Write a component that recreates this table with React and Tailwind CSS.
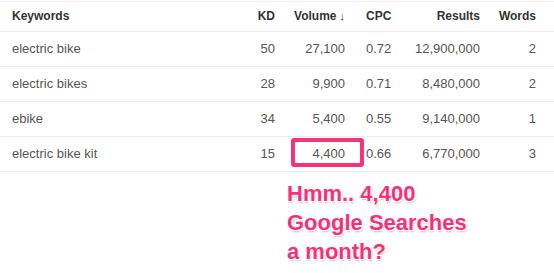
const ROWS = [
  { keyword: 'electric bike', kd: 50, volume: '27,100', cpc: '0.72', results: '12,900,000', words: 2 },
  { keyword: 'electric bikes', kd: 28, volume: '9,900', cpc: '0.71', results: '8,480,000', words: 2 },
  { keyword: 'ebike', kd: 34, volume: '5,400', cpc: '0.55', results: '9,140,000', words: 1 },
  { keyword: 'electric bike kit', kd: 15, volume: '4,400', cpc: '0.66', results: '6,770,000', words: 3, flagged: true },
];

export default function App() {
  return (
    <div
      className="w-[554px] h-[273px] bg-white overflow-hidden"
      style={{ fontFamily: '"Liberation Sans", Arial, sans-serif' }}
    >
      <div className="h-[1px] mt-[1px] bg-[#f0f0f0]" />
      <table className="w-[554px] table-fixed border-collapse">
        <colgroup>
          <col className="w-[240px]" />
          <col className="w-[43px]" />
          <col className="w-[70px]" />
          <col className="w-[47px]" />
          <col className="w-[88px]" />
          <col className="w-[66px]" />
        </colgroup>
        <thead>
          <tr className="h-[29px] border-b border-[#ececec] text-[12px] font-bold text-[#333]">
            <th className="pl-3 text-left">Keywords</th>
            <th className="pr-2 text-right">KD</th>
            <th className="pr-2 text-right whitespace-nowrap">
              Volume<span className="ml-[3px] text-[11px]">↓</span>
            </th>
            <th className="pl-[13px] text-left">CPC</th>
            <th className="pr-2 text-right">Results</th>
            <th className="pr-[18px] text-right">Words</th>
          </tr>
        </thead>
        <tbody className="text-[13px] text-[#555]">
          {ROWS.map(row => (
            <tr key={row.keyword} className="h-[35px] border-b border-[#ececec]">
              <td className="pl-3">{row.keyword}</td>
              <td className="pr-2 text-right">{row.kd}</td>
              <td className="pr-2 text-right relative">
                {row.volume}
                {row.flagged && (
                  <div className="absolute left-[8px] top-[1px] w-[73px] h-[29px] border-[4px] border-[#f7347a] rounded-[3px]" />
                )}
              </td>
              <td className="pl-[13px] text-left">{row.cpc}</td>
              <td className="pr-2 text-right">{row.results}</td>
              <td className="pr-[18px] text-right">{row.words}</td>
            </tr>
          ))}
        </tbody>
      </table>

      {/* Annotation */}
      <p
        className="ml-[287px] mt-[7px] text-[22px] leading-[29px] font-bold text-[#fb2f78]"
        style={{ textShadow: '1px 1px 0 #fff, -1px -1px 0 #fff, 1px -1px 0 #fff, -1px 1px 0 #fff, 1px 2px 2px rgba(0,0,0,0.25)' }}
      >
        Hmm.. 4,400
        <br />
        Google Searches
        <br />
        a month?
      </p>
    </div>
  );
}
